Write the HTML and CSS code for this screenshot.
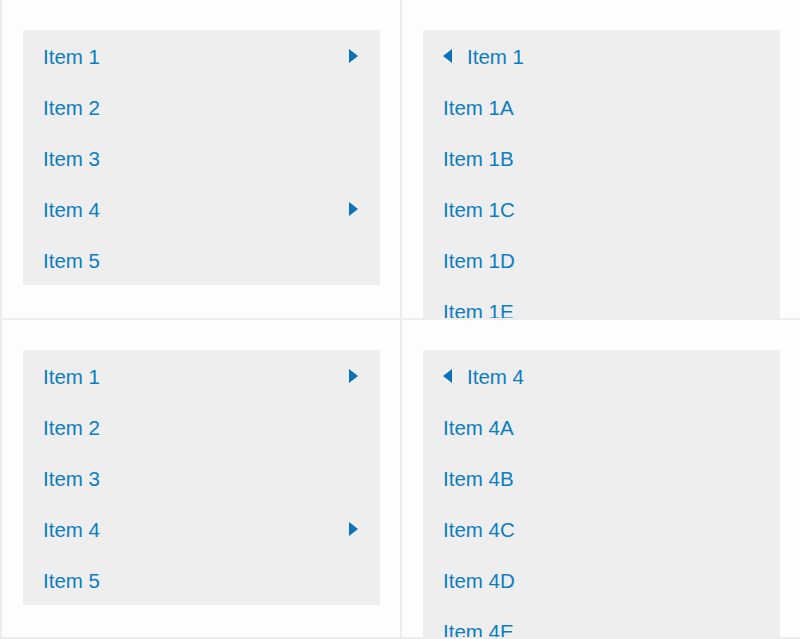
FILE: index.html
```html
<!DOCTYPE html>
<html lang="en">
<head>
    <meta charset="UTF-8">
    <meta name="viewport" content="width=device-width, initial-scale=1.0">
    <title>Drilldown Menu</title>
    <link rel="stylesheet" href="styles.css">
</head>
<body>
    <div class="demo-grid">
        <div class="cell">
            <ul class="menu">
                <li class="menu-item has-sub">Item 1</li>
                <li class="menu-item">Item 2</li>
                <li class="menu-item">Item 3</li>
                <li class="menu-item has-sub">Item 4</li>
                <li class="menu-item">Item 5</li>
            </ul>
        </div>
        <div class="cell">
            <ul class="menu menu-open">
                <li class="menu-item back">Item 1</li>
                <li class="menu-item">Item 1A</li>
                <li class="menu-item">Item 1B</li>
                <li class="menu-item">Item 1C</li>
                <li class="menu-item">Item 1D</li>
                <li class="menu-item">Item 1E</li>
            </ul>
        </div>
        <div class="cell">
            <ul class="menu">
                <li class="menu-item has-sub">Item 1</li>
                <li class="menu-item">Item 2</li>
                <li class="menu-item">Item 3</li>
                <li class="menu-item has-sub">Item 4</li>
                <li class="menu-item">Item 5</li>
            </ul>
        </div>
        <div class="cell">
            <ul class="menu menu-open">
                <li class="menu-item back">Item 4</li>
                <li class="menu-item">Item 4A</li>
                <li class="menu-item">Item 4B</li>
                <li class="menu-item">Item 4C</li>
                <li class="menu-item">Item 4D</li>
                <li class="menu-item">Item 4E</li>
            </ul>
        </div>
    </div>
</body>
</html>
```

FILE: styles.css
```css
body {
    margin: 0;
    padding: 0;
    background-color: #fff;
    font-family: "Liberation Sans", Arial, sans-serif;
    overflow: hidden;
}

/* 2x2 demo layout */
.demo-grid {
    display: grid;
    grid-template-columns: 400px 400px;
    grid-template-rows: 320px 319px;
    width: 800px;
    height: 639px;
}

.cell {
    box-sizing: border-box;
    border-left: 2px solid #ededed;
    border-bottom: 2px solid #ededed;
    padding: 30px 20px 0 21px;
    overflow: hidden;
    background-color: #fdfdfd;
}

.menu {
    list-style: none;
    margin: 0;
    padding: 0;
    background-color: #eee;
}

.menu-item {
    box-sizing: border-box;
    display: flex;
    align-items: center;
    height: 51px;
    padding: 3px 22px 0 20px;
    font-size: 20.5px;
    color: #0b7dc1;
    cursor: pointer;
}

/* arrow for items with a submenu */
.has-sub::after {
    content: "";
    margin-left: auto;
    margin-top: -2px;
    border-style: solid;
    border-width: 7px 0 7px 9px;
    border-color: transparent transparent transparent #0a72b8;
}

.back::before {
    content: "";
    margin-right: 15px;
    margin-top: -2px;
    border-style: solid;
    border-width: 7px 9px 7px 0;
    border-color: transparent #0a72b8 transparent transparent;
}
```
